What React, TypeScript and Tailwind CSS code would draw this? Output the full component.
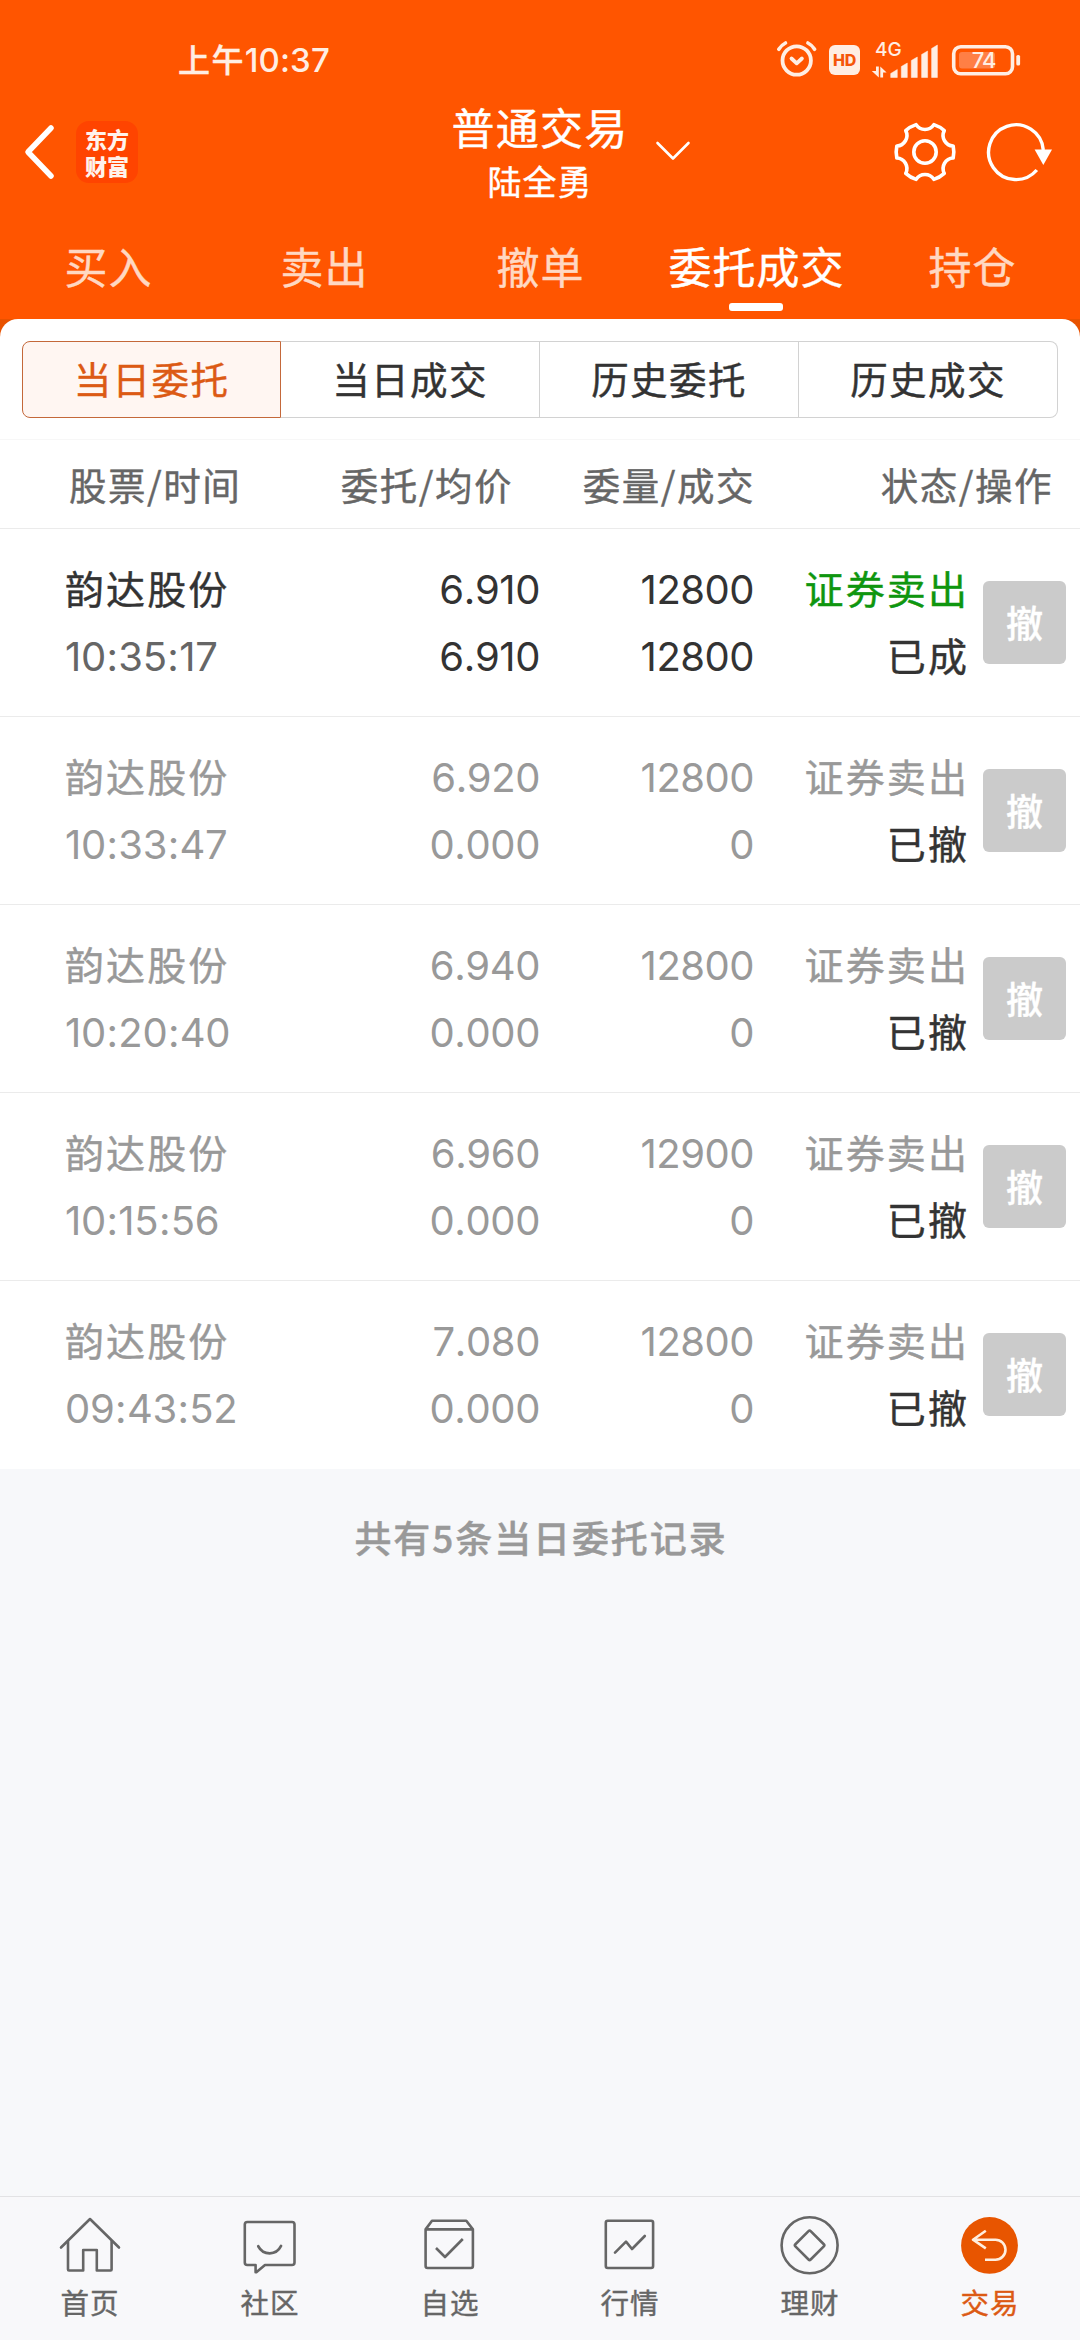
import React from "react";

const CJK = "font-['Noto_Sans_CJK_SC',sans-serif] [-webkit-text-stroke:0.4px]";
const NUM = "font-['Inter',sans-serif] [font-kerning:none] [-webkit-text-stroke:0px]";

type Order = {
  name: string;
  time: string;
  price: string;
  avg: string;
  qty: string;
  filled: string;
  state: string;
  done?: boolean;
};

const orders: Order[] = [
  { name: "韵达股份", time: "10:35:17", price: "6.910", avg: "6.910", qty: "12800", filled: "12800", state: "已成", done: true },
  { name: "韵达股份", time: "10:33:47", price: "6.920", avg: "0.000", qty: "12800", filled: "0", state: "已撤" },
  { name: "韵达股份", time: "10:20:40", price: "6.940", avg: "0.000", qty: "12800", filled: "0", state: "已撤" },
  { name: "韵达股份", time: "10:15:56", price: "6.960", avg: "0.000", qty: "12900", filled: "0", state: "已撤" },
  { name: "韵达股份", time: "09:43:52", price: "7.080", avg: "0.000", qty: "12800", filled: "0", state: "已撤" },
];

const mainTabs = ["买入", "卖出", "撤单", "委托成交", "持仓"];
const subTabs = ["当日委托", "当日成交", "历史委托", "历史成交"];

function StatusBar() {
  return (
    <div className="flex h-[100px] items-start pl-[178px] pr-[59px] text-[#ffeee3]">
      <div className="mt-[36px] flex h-[48px] items-start font-medium">
        <span className="text-[32px] leading-[45px] tracking-[1.4px]">上午</span>
        <span className={`${NUM} text-[33px] leading-[48px] tracking-[0.1px]`}>10:37</span>
      </div>
      <div className="ml-auto mt-[36px] flex h-[48px] items-center">
        <svg width="44" height="44" viewBox="775 38 44 44" fill="none" stroke="currentColor" strokeWidth="3.8" strokeLinecap="round" strokeLinejoin="round">
          <circle cx="796.7" cy="60.5" r="14.2" />
          <path d="M778.8 49.3 Q781.5 45 785.5 43M807.9 43 Q812 45 814.6 49.3" strokeWidth="3.6" />
          <path d="M791.5 58.5l5.2 4.8 5.2-4.8" />
        </svg>
        <div className={`${NUM} ml-[10px] flex h-[30px] w-[31px] items-center justify-center rounded-[6px] bg-[#ffeee3] text-[16px] font-extrabold leading-none tracking-[-0.3px] text-[#f5560a]`}>
          HD
        </div>
        <div className="relative ml-[11px] h-[38px] w-[70px]">
          <span className={`${NUM} absolute left-[4px] top-[-1px] text-[19px] font-medium leading-[20px]`}>4G</span>
          <svg className="absolute left-0 top-0" width="70" height="38" viewBox="871 38 70 38" fill="currentColor">
            <path d="M890.7 74.5v-4l6.6-4v8zM901.3 74.5v-11l6-3.5v14.5zM911.3 74.5v-17l6-3.5v20.5zM921.6 74.5v-23l6-3.5v26.5zM931.6 74.5v-29l5.8-3.5v32.5z" strokeLinejoin="round" stroke="currentColor" strokeWidth="0.5" />
            <path d="M876 63.5h2.8v11l-7-6.5h4.2zM880.3 74.5v-11l6.3 6h-3.5v5z" />
          </svg>
        </div>
        <svg className="ml-[10px]" width="70" height="34" viewBox="951 42 70 34" fill="none">
          <rect x="953.7" y="45.7" width="58.8" height="27" rx="7" stroke="currentColor" strokeWidth="3.6" />
          <rect x="959" y="51" width="36" height="16.5" rx="3" fill="#ff7f45" />
          <rect x="1016.3" y="54" width="3.8" height="10.5" rx="1.6" fill="currentColor" />
          <text x="983.7" y="67.4" textAnchor="middle" className="font-['Inter',sans-serif] text-[22px] font-medium" fill="currentColor" letterSpacing="-0.9">74</text>
        </svg>
      </div>
    </div>
  );
}

function gearPath(): string {
  const pt = (deg: number) => {
    const a = (deg * Math.PI) / 180;
    return `${(32 + 28.8 * Math.cos(a)).toFixed(2)} ${(32 + 28.8 * Math.sin(a)).toFixed(2)}`;
  };
  let d = `M${pt(-12)}`;
  for (let k = 0; k < 6; k++) {
    d += `A28 28 0 0 1 ${pt(k * 60 + 12)}A10.6 10.6 0 0 0 ${pt(k * 60 + 48)}`;
  }
  return d + "Z";
}

function TitleBar() {
  return (
    <div className="flex h-[110px] items-center pb-[6px]">
      <div className="flex w-[300px] items-center pl-[20px]">
        <svg width="40" height="60" viewBox="0 0 40 60" fill="none" stroke="#fff" strokeWidth="5.5" strokeLinecap="round" strokeLinejoin="round">
          <path d="M31 6 L8 30 L31 54" />
        </svg>
        <div className="ml-[16px] flex h-[62px] w-[62px] items-center justify-center rounded-[13px] bg-[#ff4400]">
          <p className="w-[44px] break-all text-[22px] font-black leading-[27px] text-[#fff3ec] [-webkit-text-stroke:0px]">东方财富</p>
        </div>
      </div>
      <div className="flex w-[480px] items-center">
        <div className="ml-[140px] flex w-[200px] flex-col items-center whitespace-nowrap text-white">
          <span className="h-[56px] text-[43px] leading-[54px] tracking-[1.2px]">普通交易</span>
          <span className="h-[50px] text-[34px] leading-[51px] tracking-[1px]">陆全勇</span>
        </div>
        <svg className="mb-[2px] ml-[14px]" width="38" height="24" viewBox="0 0 38 24" fill="none" stroke="#fff" strokeWidth="2.6" strokeLinecap="round" strokeLinejoin="round">
          <path d="M3.5 4 L19 19.5 L34.5 4" />
        </svg>
      </div>
      <div className="flex flex-1 items-center justify-end pr-[24px]">
        <svg className="mb-[1px]" width="64" height="64" viewBox="0 0 64 64" fill="none" stroke="#fff" strokeWidth="3.6" strokeLinejoin="round">
          <path d={gearPath()} />
          <circle cx="32" cy="32" r="11.2" />
        </svg>
        <svg className="ml-[27px]" width="72" height="64" viewBox="0 0 72 64" fill="none" stroke="#fff" strokeWidth="3.4">
          <path d="M52.8 50 A27.4 27.4 0 1 1 59.3 30" />
          <path d="M50.6 29.5 H68 L59.3 45 Z" fill="#fff" stroke="none" />
        </svg>
      </div>
    </div>
  );
}

function MainTabs() {
  return (
    <div className="grid h-[109px] grid-cols-5">
      {mainTabs.map((t) => {
        const active = t === "委托成交";
        return (
          <div key={t} className="flex flex-col items-center">
            <span className={`ml-[1px] mt-[23px] h-[64px] whitespace-nowrap text-[43px] leading-[64px] tracking-[1px] ${active ? "text-white" : "text-[#ffd8c2]"}`}>{t}</span>
            {active && <span className="mt-[6px] h-[8px] w-[54px] rounded-[3px] bg-white" />}
          </div>
        );
      })}
    </div>
  );
}

function SubTabs() {
  return (
    <div className="grid h-[121px] grid-cols-4 rounded-t-[18px] border-b border-[#f7f7f7] bg-white px-[22px] pb-[21px] pt-[22px]">
      {subTabs.map((t, i) => (
        <div
          key={t}
          className={`flex items-center justify-center border pb-[3px] text-[37.5px] leading-none tracking-[1.4px] ${
            i === 0
              ? "rounded-l-[8px] border-[#c4683a] bg-[#fff6f2] text-[#dc5a14]"
              : i === 3
                ? "rounded-r-[8px] border-l-0 border-[#d2d2d2] text-[#333]"
                : "border-l-0 border-[#d2d2d2] text-[#333]"
          }`}
        >
          {t}
        </div>
      ))}
    </div>
  );
}

function TableHead() {
  return (
    <div className="flex h-[89px] items-center border-b border-[#ebebeb] bg-white pb-[1px] text-[37.5px] leading-[86px] tracking-[1.5px] text-[#666]">
      <span className="w-[242px] whitespace-nowrap pl-[69px]">股票/时间</span>
      <span className="w-[271px] whitespace-nowrap text-right">委托/均价</span>
      <span className="w-[242px] whitespace-nowrap text-right">委量/成交</span>
      <span className="w-[298px] whitespace-nowrap text-right">状态/操作</span>
    </div>
  );
}

/** Time digits with slightly wider colons than the font's own. */
function Clock({ value, className }: { value: string; className: string }) {
  return (
    <span className={className}>
      {value.split(/(:)/).map((part, i) =>
        part === ":" ? (
          <span key={i} className="px-[0.6px]">
            {part}
          </span>
        ) : (
          part
        ),
      )}
    </span>
  );
}

function OrderRow({ o, last }: { o: Order; last: boolean }) {
  const main = o.done ? "text-[#333]" : "text-[#999]";
  return (
    <div
      className={`flex h-[188px] items-center border-b bg-white pl-[65px] pr-[14px] text-[39px] leading-[67px] ${last ? "border-white" : "border-[#ebebeb]"} ${main}`}
    >
      <div className="flex w-[219px] flex-col whitespace-nowrap">
        <span className="h-[67px] leading-[63px] tracking-[2.1px]">{o.name}</span>
        <Clock value={o.time} className={`${NUM} h-[67px] text-[40px] tracking-[-0.3px] ${o.done ? "text-[#666]" : ""}`} />
      </div>
      <div className={`${NUM} flex w-[256px] flex-col text-right text-[40px] tracking-[-0.4px]`}>
        <span className="h-[67px]">{o.price}</span>
        <span className="h-[67px]">{o.avg}</span>
      </div>
      <div className={`${NUM} flex w-[214px] flex-col text-right text-[40px] tracking-[-0.5px]`}>
        <span className="h-[67px]">{o.qty}</span>
        <span className="h-[67px]">{o.filled}</span>
      </div>
      <div className="flex w-[215px] flex-col whitespace-nowrap text-right leading-[63px] tracking-[2.1px]">
        <span className={`h-[67px] ${o.done ? "text-[#0f960f]" : ""}`}>证券卖出</span>
        <span className="h-[67px] text-[#333]">{o.state}</span>
      </div>
      <div className="ml-auto flex h-[83px] w-[83px] items-center justify-center rounded-[6px] bg-[#cbcbcb] text-[37px] font-medium leading-none text-white">撤</div>
    </div>
  );
}

const navItems: { label: string; icon: React.ReactNode; active?: boolean }[] = [
  {
    label: "首页",
    icon: (
      <>
        <path d="M3 33.5 L32 5 L61 33.5" />
        <path d="M10 27.5 V55.5 Q10 56.5 11 56.5 H25.2 V36 H38.8 V56.5 H52.6 Q53.6 56.5 53.6 55.5 V27.5" />
      </>
    ),
  },
  {
    label: "社区",
    icon: (
      <>
        <path d="M9.3 8 H54 Q56.5 8 56.5 10.5 V48.5 Q56.5 51 54 51 H27 L18.3 58.2 H17.6 V51 H9.3 Q6.8 51 6.8 48.5 V10.5 Q6.8 8 9.3 8Z" />
        <path d="M20.3 32.3 Q24 39.3 31.7 39.3 Q39.4 39.3 43 32" strokeWidth="2.8" />
      </>
    ),
  },
  {
    label: "自选",
    icon: (
      <>
        <path d="M7.6 15.4 L14 6.8 H48.3 L54.9 15.4 V52 Q54.9 54 52.9 54 H9.6 Q7.6 54 7.6 52Z M7.6 15.4 H54.9" />
        <path d="M18 34 L27 43 L44.8 25" strokeLinecap="butt" />
      </>
    ),
  },
  {
    label: "行情",
    icon: (
      <>
        <rect x="7.8" y="6.8" width="47.3" height="47.2" rx="2" />
        <path d="M17 38.7 L28 27.7 L34 35 L46.8 22" />
      </>
    ),
  },
  {
    label: "理财",
    icon: (
      <>
        <circle cx="31.6" cy="31.3" r="28" />
        <rect x="20.8" y="20.5" width="21.6" height="21.6" rx="1.5" transform="rotate(45 31.6 31.3)" />
      </>
    ),
  },
  {
    label: "交易",
    active: true,
    icon: (
      <>
        <circle cx="31.5" cy="31.4" r="28.4" fill="#e85500" stroke="none" />
        <path d="M27.8 16.8 L15 25.7 L27.8 34.3 M15 25.7 H37.5 A10 10 0 0 1 37.5 45.7 H27" stroke="#ffeede" strokeWidth="2.6" strokeLinecap="butt" />
      </>
    ),
  },
];

function BottomNav() {
  return (
    <div className="grid h-[144px] grid-cols-6 border-t border-[#e2e2e4] bg-[#f8f8fa]">
      {navItems.map((n) => (
        <div key={n.label} className={`flex flex-col items-center pt-[17px] ${n.active ? "text-[#dc5a14]" : "text-[#666]"}`}>
          <svg width="64" height="64" viewBox="0 0 64 64" fill="none" stroke="currentColor" strokeWidth="2.6" strokeLinejoin="round" strokeLinecap="round">
            {n.icon}
          </svg>
          <span className="mt-[4px] text-[28.5px] leading-[40px] tracking-[1px]">{n.label}</span>
        </div>
      ))}
    </div>
  );
}

export default function App() {
  return (
    <div className={`${CJK} flex h-[2340px] w-[1080px] flex-col overflow-hidden bg-[#f7f8fa]`}>
      <header className="h-[319px] bg-[#ff5500]">
        <StatusBar />
        <TitleBar />
        <MainTabs />
      </header>
      <div className="bg-[#e85200]">
        <SubTabs />
      </div>
      <TableHead />
      {orders.map((o, i) => (
        <OrderRow key={o.time} o={o} last={i === orders.length - 1} />
      ))}
      <p className="mt-[38px] pl-[2px] text-center text-[37px] font-medium leading-[60px] tracking-[1.9px] text-[#999]">共有5条当日委托记录</p>
      <div className="mt-auto">
        <BottomNav />
      </div>
    </div>
  );
}
